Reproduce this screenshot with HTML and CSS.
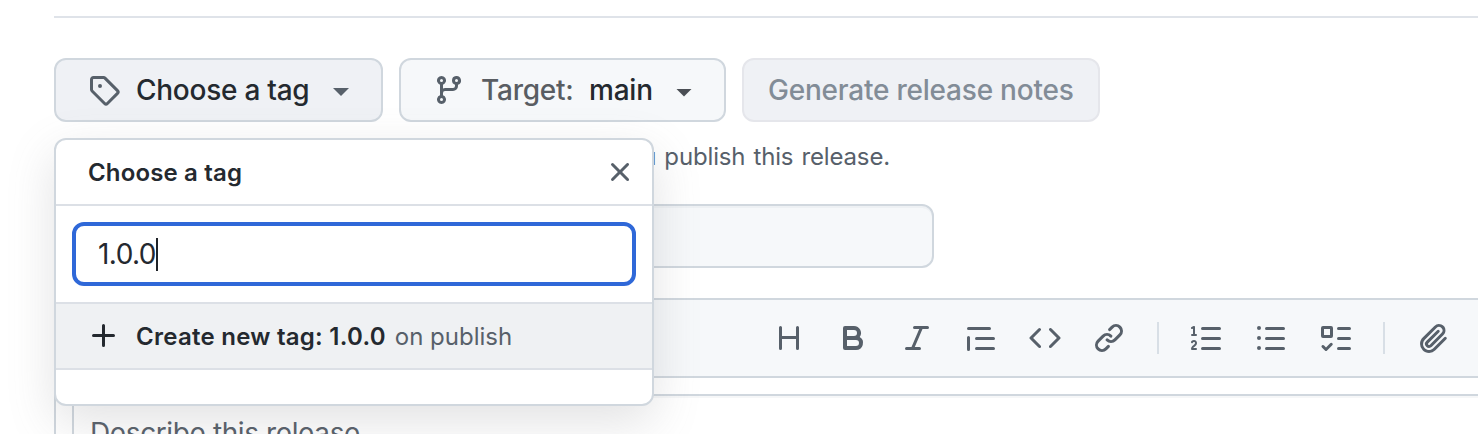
FILE: index.html
```
<!DOCTYPE html>
<html lang="en">
<head>
<meta charset="utf-8">
<title>New release</title>
<link rel="stylesheet" href="styles.css">
</head>
<body>
<main class="release">
  <div class="actions">
    <button class="btn btn-tag"><svg class="icon" viewBox="0 0 16 16"><path d="M1 7.775V2.75C1 1.784 1.784 1 2.75 1h5.025c.464 0 .91.184 1.238.513l6.25 6.25a1.75 1.75 0 0 1 0 2.474l-5.026 5.026a1.75 1.75 0 0 1-2.474 0l-6.25-6.25A1.752 1.752 0 0 1 1 7.775Zm1.5 0c0 .066.026.13.073.177l6.25 6.25a.25.25 0 0 0 .354 0l5.025-5.025a.25.25 0 0 0 0-.354l-6.25-6.25a.25.25 0 0 0-.177-.073H2.75a.25.25 0 0 0-.25.25ZM6 5a1 1 0 1 1 0 2 1 1 0 0 1 0-2Z"/></svg><span class="label label-tag">Choose a tag</span><span class="caret"></span></button>
    <button class="btn btn-target"><svg class="icon" viewBox="0 0 16 16"><path d="M9.5 3.25a2.25 2.25 0 1 1 3 2.122V6A2.5 2.5 0 0 1 10 8.5H6a1 1 0 0 0-1 1v1.128a2.251 2.251 0 1 1-1.5 0V5.372a2.25 2.25 0 1 1 1.5 0v1.836A2.493 2.493 0 0 1 6 7h4a1 1 0 0 0 1-1v-.628A2.25 2.25 0 0 1 9.5 3.25Zm-6 0a.75.75 0 1 0 1.5 0 .75.75 0 0 0-1.5 0Zm8.25-.75a.75.75 0 1 0 0 1.5.75.75 0 0 0 0-1.5ZM4.25 12a.75.75 0 1 0 0 1.5.75.75 0 0 0 0-1.5Z"/></svg><span class="label label-target">Target:</span><span class="label label-main">main</span><span class="caret caret-dark"></span></button>
    <button class="btn btn-notes" disabled><span class="label label-notes">Generate release notes</span></button>
  </div>
  <p class="hint">Choose an existing tag, or create a new tag when you publish this release.</p>
  <div class="title-field"></div>
  <section class="editor">
    <div class="toolbar">
      <svg class="icon" viewBox="0 0 16 16"><path d="M3.75 2a.75.75 0 0 1 .75.75V7h7V2.75a.75.75 0 0 1 1.5 0v10.5a.75.75 0 0 1-1.5 0V8.5h-7v4.75a.75.75 0 0 1-1.5 0V2.75A.75.75 0 0 1 3.75 2Z"/></svg>
      <svg class="icon" viewBox="0 0 16 16"><path d="M4 2h4.5a3.501 3.501 0 0 1 2.852 5.53A3.499 3.499 0 0 1 9.5 14H4a1 1 0 0 1-1-1V3a1 1 0 0 1 1-1Zm1 7v3h4.5a1.5 1.5 0 0 0 0-3Zm3.5-2a1.5 1.5 0 0 0 0-3H5v3Z"/></svg>
      <svg class="icon" viewBox="0 0 16 16"><path d="M6 2.75A.75.75 0 0 1 6.75 2h6.5a.75.75 0 0 1 0 1.5h-2.505l-3.858 9H9.25a.75.75 0 0 1 0 1.5h-6.5a.75.75 0 0 1 0-1.5h2.505l3.858-9H6.75A.75.75 0 0 1 6 2.75Z"/></svg>
      <svg class="icon" viewBox="0 0 16 16"><path d="M1.75 2.5h10.5a.75.75 0 0 1 0 1.5H1.75a.75.75 0 0 1 0-1.5Zm4 5h8.5a.75.75 0 0 1 0 1.5h-8.5a.75.75 0 0 1 0-1.5Zm0 5h8.5a.75.75 0 0 1 0 1.5h-8.5a.75.75 0 0 1 0-1.5ZM2.5 7.75v6a.75.75 0 0 1-1.5 0v-6a.75.75 0 0 1 1.5 0Z"/></svg>
      <svg class="icon" viewBox="0 0 16 16"><path d="m11.28 3.22 4.25 4.25a.75.75 0 0 1 0 1.06l-4.25 4.25a.749.749 0 0 1-1.275-.326.749.749 0 0 1 .215-.734L13.94 8l-3.72-3.72a.749.749 0 0 1 .326-1.275.749.749 0 0 1 .734.215Zm-6.56 0a.751.751 0 0 1 1.042.018.751.751 0 0 1 .018 1.042L2.06 8l3.72 3.72a.749.749 0 0 1-.326 1.275.749.749 0 0 1-.734-.215L.47 8.53a.75.75 0 0 1 0-1.06Z"/></svg>
      <svg class="icon" viewBox="0 0 16 16"><path d="m7.775 3.275 1.25-1.25a3.5 3.5 0 1 1 4.95 4.95l-2.5 2.5a3.5 3.5 0 0 1-4.95 0 .751.751 0 0 1 .018-1.042.751.751 0 0 1 1.042-.018 1.998 1.998 0 0 0 2.83 0l2.5-2.5a2.002 2.002 0 0 0-2.83-2.83l-1.25 1.25a.751.751 0 0 1-1.042-.018.751.751 0 0 1-.018-1.042Zm-4.69 9.64a1.998 1.998 0 0 0 2.83 0l1.25-1.25a.751.751 0 0 1 1.042.018.751.751 0 0 1 .018 1.042l-1.25 1.25a3.5 3.5 0 1 1-4.95-4.95l2.5-2.5a3.5 3.5 0 0 1 4.95 0 .751.751 0 0 1-.018 1.042.751.751 0 0 1-1.042.018 1.998 1.998 0 0 0-2.83 0l-2.5 2.5a1.998 1.998 0 0 0 0 2.83Z"/></svg>
      <span class="divider"></span>
      <svg class="icon" viewBox="0 0 16 16"><path d="M5 3.25a.75.75 0 0 1 .75-.75h8.5a.75.75 0 0 1 0 1.5h-8.5A.75.75 0 0 1 5 3.25Zm0 5a.75.75 0 0 1 .75-.75h8.5a.75.75 0 0 1 0 1.5h-8.5A.75.75 0 0 1 5 8.25Zm0 5a.75.75 0 0 1 .75-.75h8.5a.75.75 0 0 1 0 1.5h-8.5a.75.75 0 0 1-.75-.75ZM.924 10.32a.5.5 0 0 1-.851-.525l.001-.001.001-.002.002-.004.007-.011c.097-.144.215-.273.348-.384.228-.19.588-.392 1.068-.392.468 0 .858.181 1.126.484.259.294.377.673.377 1.038 0 .987-.686 1.495-1.156 1.845l-.047.035c-.303.225-.522.4-.654.597h1.357a.5.5 0 0 1 0 1H.5a.5.5 0 0 1-.5-.5c0-1.005.692-1.52 1.167-1.875l.035-.025c.531-.396.8-.625.8-1.078a.57.57 0 0 0-.128-.376C1.806 10.068 1.695 10 1.5 10a.658.658 0 0 0-.429.163.835.835 0 0 0-.144.153ZM2.003 2.5V6h.503a.5.5 0 0 1 0 1H.5a.5.5 0 0 1 0-1h.503V3.308l-.28.14a.5.5 0 0 1-.446-.895l1.003-.5a.5.5 0 0 1 .723.447Z"/></svg>
      <svg class="icon" viewBox="0 0 16 16"><path d="M5.75 2.5h8.5a.75.75 0 0 1 0 1.5h-8.5a.75.75 0 0 1 0-1.5Zm0 5h8.5a.75.75 0 0 1 0 1.5h-8.5a.75.75 0 0 1 0-1.5Zm0 5h8.5a.75.75 0 0 1 0 1.5h-8.5a.75.75 0 0 1 0-1.5ZM2 14a1 1 0 1 1 0-2 1 1 0 0 1 0 2Zm1-6a1 1 0 1 1-2 0 1 1 0 0 1 2 0ZM2 4a1 1 0 1 1 0-2 1 1 0 0 1 0 2Z"/></svg>
      <svg class="icon" viewBox="0 0 16 16"><path d="M2 2h4a1 1 0 0 1 1 1v4a1 1 0 0 1-1 1H2a1 1 0 0 1-1-1V3a1 1 0 0 1 1-1Zm4.655 8.595a.75.75 0 0 1 0 1.06L4.03 14.28a.75.75 0 0 1-1.06 0l-1.5-1.5a.749.749 0 0 1 .326-1.275.749.749 0 0 1 .734.215l.97.97 2.095-2.095a.75.75 0 0 1 1.06 0ZM9.75 2.5h5.5a.75.75 0 0 1 0 1.5h-5.5a.75.75 0 0 1 0-1.5Zm0 5h5.5a.75.75 0 0 1 0 1.5h-5.5a.75.75 0 0 1 0-1.5Zm0 5h5.5a.75.75 0 0 1 0 1.5h-5.5a.75.75 0 0 1 0-1.5Zm-7.25-9v3h3v-3Z"/></svg>
      <span class="divider"></span>
      <svg class="icon" viewBox="0 0 16 16"><path d="M12.212 3.02a1.753 1.753 0 0 0-2.478.003l-5.83 5.83a3.007 3.007 0 0 0-.88 2.127c0 .795.315 1.551.88 2.116.567.567 1.333.89 2.126.89.79 0 1.548-.321 2.116-.89l5.48-5.48a.75.75 0 0 1 1.061 1.06l-5.48 5.48a4.492 4.492 0 0 1-3.177 1.33c-1.2 0-2.345-.487-3.187-1.33a4.483 4.483 0 0 1-1.32-3.177c0-1.195.475-2.341 1.32-3.186l5.83-5.83a3.25 3.25 0 0 1 5.553 2.297c0 .863-.343 1.691-.953 2.301L7.439 12.39c-.375.377-.884.59-1.416.593a1.998 1.998 0 0 1-1.412-.593 1.992 1.992 0 0 1 0-2.828l5.48-5.48a.751.751 0 0 1 1.042.018.751.751 0 0 1 .018 1.042l-5.48 5.48a.492.492 0 0 0 0 .707.499.499 0 0 0 .352.154.51.51 0 0 0 .356-.154l5.833-5.827a1.755 1.755 0 0 0 0-2.481Z"/></svg>
    </div>
    <div class="textarea"><span class="placeholder">Describe this release</span></div>
  </section>
  <div class="popover">
    <header class="popover-head"><span class="popover-title">Choose a tag</span><svg class="icon" viewBox="0 0 16 16"><path d="M3.72 3.72a.75.75 0 0 1 1.06 0L8 6.94l3.22-3.22a.749.749 0 0 1 1.275.326.749.749 0 0 1-.215.734L9.06 8l3.22 3.22a.749.749 0 0 1-.326 1.275.749.749 0 0 1-.734-.215L8 9.06l-3.22 3.22a.751.751 0 0 1-1.042-.018.751.751 0 0 1-.018-1.042L6.94 8 3.72 4.78a.75.75 0 0 1 0-1.06Z"/></svg></header>
    <div class="filter"><div class="filter-input"><span class="filter-text">1.0.0</span><span class="cursor"></span></div></div>
    <div class="create"><svg class="icon" viewBox="0 0 16 16"><path d="M7.75 2a.75.75 0 0 1 .75.75V7h4.25a.75.75 0 0 1 0 1.5H8.5v4.25a.75.75 0 0 1-1.5 0V8.5H2.75a.75.75 0 0 1 0-1.5H7V2.75A.75.75 0 0 1 7.75 2Z"/></svg><span class="create-name">Create new tag: 1.0.0</span><span class="create-note">on publish</span></div>
  </div>
</main>
</body>
</html>
```
FILE: styles.css
```
* { box-sizing: border-box; }
body {
  margin: 0;
  height: 434px;
  overflow: hidden;
  background: #fff;
  color: #24292f;
  font-family: Inter, "Liberation Sans", sans-serif;
}
.release {
  position: relative;
  margin: 16px 0 0 54px;
  border-top: 2px solid #dfe3e9;
  padding-top: 40px;
}
.icon { width: 32px; height: 32px; flex: none; fill: #57606a; }
.actions { display: flex; gap: 16px; }
.btn {
  display: flex;
  align-items: center;
  height: 64px;
  padding: 0 32px;
  border: 2px solid #d0d7de;
  border-radius: 12px;
  background: #f6f8fa;
  color: #24292f;
  font: 500 28px/40px Inter, "Liberation Sans", sans-serif;
  white-space: nowrap;
}
.btn-tag { width: 329px; background: #eff1f5; }
.btn-target { width: 327px; }
.btn-notes { width: 358px; padding: 0 24px; background: #eff1f5; border-color: #e5e6eb; color: #828c97; }
.label-tag { width: 197px; margin-left: 16px; text-align: left; letter-spacing: -0.26px; }
.label-target { width: 108px; margin-left: 16px; text-align: left; letter-spacing: -0.25px; color: #595d62; }
.label-main { width: 87px; text-align: left; letter-spacing: -0.2px; }
.label-notes { letter-spacing: -0.22px; }
.caret {
  width: 16px;
  height: 8px;
  margin-top: 4px;
  background: #57606a;
  clip-path: polygon(0 0, 100% 0, 50% 100%);
}
.caret-dark { margin-top: 5px; background: #4a4e54; }
.hint {
  display: flex;
  justify-content: flex-end;
  width: 836px;
  height: 36px;
  margin: 17px 0 29px;
  overflow: hidden;
  font-size: 24px;
  line-height: 36px;
  letter-spacing: -0.15px;
  word-spacing: 1.5px;
  white-space: nowrap;
  color: #57606a;
}
.title-field {
  width: 880px;
  height: 64px;
  border: 2px solid #d0d7de;
  border-radius: 12px;
  background: #f6f8fa;
  box-shadow: inset 0 2px 0 rgba(208, 215, 222, 0.2);
}
.editor {
  margin-top: 30px;
  border: solid #d0d7de;
  border-width: 2px 0 0 2px;
  height: 136px;
}
.toolbar {
  display: flex;
  justify-content: flex-end;
  align-items: center;
  gap: 32px;
  height: 78px;
  padding-right: 29px;
  border-bottom: 2px solid #d0d7de;
  background: #f6f8fa;
}
.divider { width: 2px; height: 32px; background: #d8dfe6; }
.textarea {
  height: 40px;
  margin: 16px 0 0 16px;
  padding: 16px 16px 0;
  overflow: hidden;
  border: solid #d0d7de;
  border-width: 2px 0 0 2px;
  box-shadow: inset 0 2px 0 rgba(208, 215, 222, 0.2);
  font-size: 28px;
  line-height: 42px;
  letter-spacing: -0.39px;
  color: #57606a;
}
.popover {
  position: absolute;
  top: 120px;
  left: 0;
  width: 600px;
  height: 268px;
  border: 2px solid #d0d7de;
  border-radius: 12px;
  background: #fff;
  box-shadow: 0 16px 48px rgba(110, 112, 116, 0.2);
}
.popover-head {
  display: flex;
  align-items: center;
  justify-content: space-between;
  height: 66px;
  padding: 0 16px 0 32px;
  border-bottom: 2px solid #dce0e6;
}
.popover-title { font-size: 24px; font-weight: 600; letter-spacing: 0.15px; }
.filter { height: 98px; padding: 16px; border-bottom: 2px solid #dce0e6; }
.filter-input {
  display: flex;
  align-items: center;
  height: 64px;
  padding-left: 22px;
  border: 4px solid #2f68d8;
  border-radius: 12px;
  font-size: 28px;
}
.filter-text { letter-spacing: -0.55px; }
.cursor { width: 2px; height: 33px; background: #1f2328; }
.create {
  display: flex;
  align-items: center;
  height: 66px;
  padding-left: 32px;
  border-bottom: 2px solid #dce0e6;
  background: #eff1f3;
  font-size: 24px;
  white-space: nowrap;
}
.create .icon { fill: #24292f; }
.create-name { margin-left: 16px; font-weight: 600; letter-spacing: 0.26px; }
.create-note { margin-left: 9px; color: #57606a; }
```
